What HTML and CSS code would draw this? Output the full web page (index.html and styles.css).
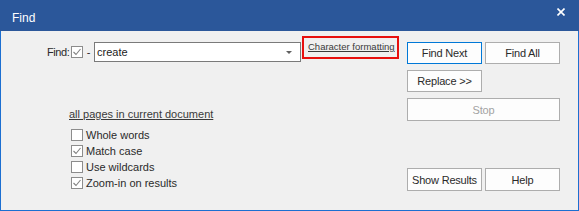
FILE: index.html
```html
<!DOCTYPE html>
<html>
<head>
<meta charset="utf-8">
<link rel="stylesheet" href="styles.css">
</head>
<body>
<div class="window">
  <div class="titlebar">
    <span class="title">Find</span>
    <svg class="close" width="8" height="8" viewBox="0 0 8 8"><path d="M0.5 0.5 L7.5 7.5 M7.5 0.5 L0.5 7.5" stroke="#fff" stroke-width="1.6" fill="none"/></svg>
  </div>
  <div class="content">
    <div class="left">
      <div class="row1">
        <div class="findline">
          <span class="findlabel">Find:</span>
          <span class="cb checked"><svg width="10" height="10" viewBox="0 0 10 10"><path d="M1.5 5 L4 7.5 L8.5 2" stroke="#808080" stroke-width="1.1" fill="none"/></svg></span>
          <span class="dash">-</span>
          <div class="combo">
            <span class="combotext">create</span>
            <span class="arrow"></span>
          </div>
        </div>
        <div class="charfmt"><span class="link small">Character formatting</span></div>
      </div>
      <div class="scope"><span class="link">all pages in current document</span></div>
      <div class="options">
        <div class="opt"><span class="cb"></span><span>Whole words</span></div>
        <div class="opt"><span class="cb checked"><svg width="10" height="10" viewBox="0 0 10 10"><path d="M1.5 5 L4 7.5 L8.5 2" stroke="#808080" stroke-width="1.1" fill="none"/></svg></span><span>Match case</span></div>
        <div class="opt"><span class="cb"></span><span>Use wildcards</span></div>
        <div class="opt"><span class="cb checked"><svg width="10" height="10" viewBox="0 0 10 10"><path d="M1.5 5 L4 7.5 L8.5 2" stroke="#808080" stroke-width="1.1" fill="none"/></svg></span><span>Zoom-in on results</span></div>
      </div>
    </div>
    <div class="right">
      <div class="btngrid">
        <button class="btn primary">Find Next</button>
        <button class="btn">Find All</button>
        <button class="btn">Replace &gt;&gt;</button>
        <span></span>
        <button class="btn disabled wide">Stop</button>
      </div>
      <div class="btngrid bottom">
        <button class="btn">Show Results</button>
        <button class="btn">Help</button>
      </div>
    </div>
  </div>
</div>
</body>
</html>
```
FILE: styles.css
```css
* { box-sizing: border-box; }
html, body { margin: 0; padding: 0; }
body {
  width: 579px;
  height: 211px;
  font-family: "Liberation Sans", Arial, sans-serif;
  font-size: 11px;
  color: #2a2a2a;
  background: #f0f0f0;
  overflow: hidden;
}
.window { width: 579px; height: 211px; display: flex; flex-direction: column; }
.titlebar {
  height: 31px;
  background: #2b579a;
  display: flex;
  justify-content: space-between;
  align-items: flex-start;
  padding-left: 12px;
  padding-right: 14px;
  flex: none;
}
.title { color: #fff; font-size: 12px; line-height: 14px; margin-top: 11px; }
.close { margin-top: 8px; display: block; }
.content {
  flex: 1;
  background: #f0f0f0;
  border: 1px solid #1c6fd1;
  border-top: none;
  display: flex;
  padding-left: 46px;
  padding-top: 5px;
  gap: 8px;
}
.left { width: 352px; display: flex; flex-direction: column; }
.row1 { display: flex; align-items: flex-start; height: 26px; }
.findline { display: flex; align-items: center; margin-top: 6px; height: 20px; }
.findlabel { width: 24px; letter-spacing: -0.4px; }
.dash { width: 11px; text-align: center; }
.cb {
  width: 12px; height: 12px;
  border: 1px solid #8c8c8c;
  background: #fff;
  display: flex; align-items: center; justify-content: center;
  flex: none;
}
.cb svg { display: block; }
.combo {
  width: 207px; height: 20px;
  border: 1px solid #7a7a7a;
  background: #fff;
  display: flex; align-items: center; justify-content: space-between;
  padding-left: 2px; padding-right: 8px;
}
.combotext { color: #222; }
.arrow {
  width: 0; height: 0;
  border-left: 3px solid transparent;
  border-right: 3px solid transparent;
  border-top: 3px solid #606060;
}
.charfmt {
  width: 97px; height: 23px;
  margin-left: 1px;
  border: 2px solid #e8100e;
  padding: 2px 0 0 4px;
  line-height: 12px;
}
.link { text-decoration: underline; color: #3a3a3a; }
.small { font-size: 9.5px; }
.scope { margin-top: 46px; margin-left: 22px; line-height: 13px; }
.options { margin-top: 6px; margin-left: 24px; display: flex; flex-direction: column; }
.opt { display: flex; align-items: center; height: 16px; gap: 3px; }
.right { width: 153px; margin-top: 6px; display: flex; flex-direction: column; }
.btngrid { display: grid; grid-template-columns: 75px 75px; column-gap: 3px; row-gap: 6px; grid-auto-rows: 22px; }
.btngrid.bottom { margin-top: 48px; grid-auto-rows: 23px; }
.btn {
  font-family: "Liberation Sans", Arial, sans-serif;
  font-size: 11px;
  letter-spacing: -0.2px;
  color: #2a2a2a;
  background: #fdfdfd;
  border: 1px solid #adadad;
  padding: 0;
  margin: 0;
}
.btn.primary { border-color: #0078d7; }
.btn.disabled { color: #a3a3a3; }
.btn.wide { grid-column: 1 / 3; height: 23px; }
```
